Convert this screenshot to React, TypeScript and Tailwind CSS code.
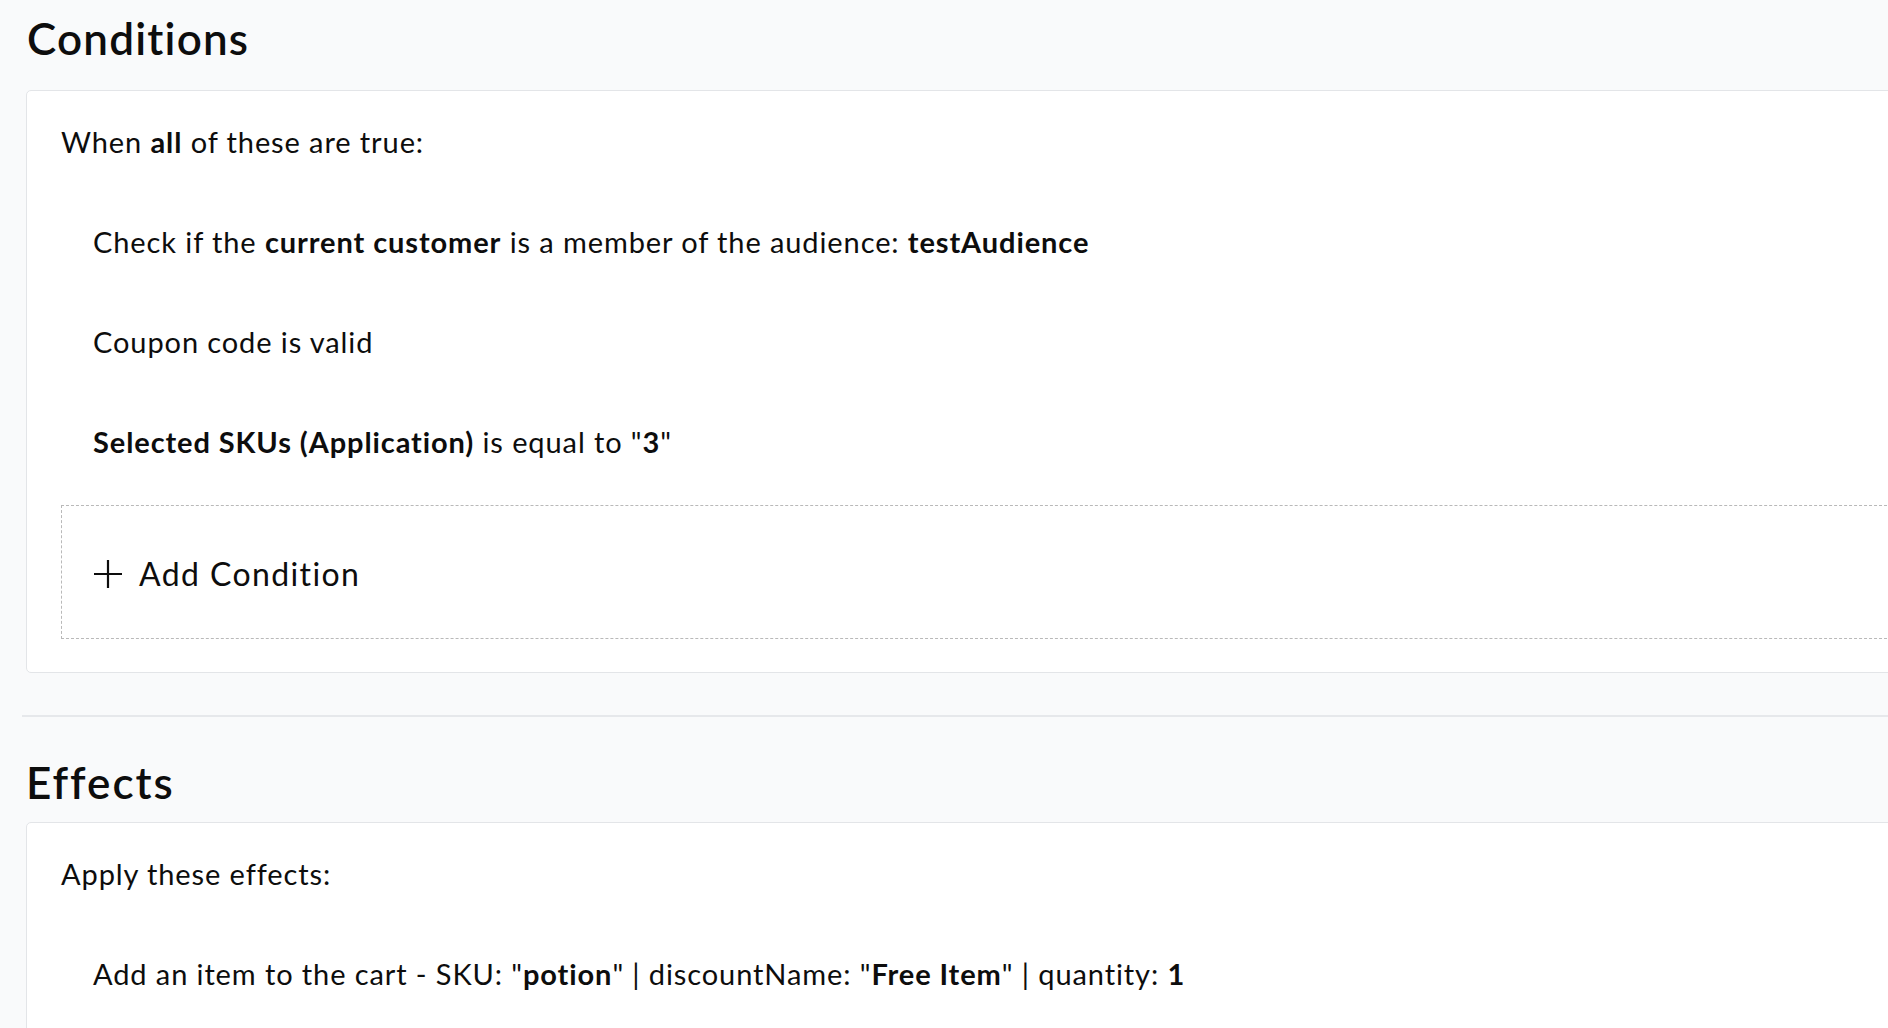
const font = { fontFamily: 'Lato, "Noto Sans", sans-serif' }

function Row({ children, indent = true }: { children: React.ReactNode; indent?: boolean }) {
  return (
    <div className={`h-[40px] leading-[40px] text-[29px] tracking-[0.9px] whitespace-nowrap ${indent ? 'pl-[32px]' : ''}`}>
      {children}
    </div>
  )
}

function PlusIcon() {
  return (
    <svg width="28" height="28" viewBox="0 0 28 28" fill="none" stroke="currentColor" strokeWidth="2.2" strokeLinecap="square">
      <path d="M14 1v26M1 14h26" />
    </svg>
  )
}

export default function App() {
  return (
    <div className="min-h-screen h-[1028px] overflow-hidden bg-[#f9fafb] text-[#0d0d0d] pl-[26px]" style={font}>
      {/* Conditions */}
      <h2 className="pt-[13px] pl-[1px] text-[44px] leading-[50px] font-semibold tracking-[1.2px]">Conditions</h2>
      <div className="mt-[27px] -mr-[20px] bg-white border border-[#e3e5e8] rounded-[5px] pl-[34px] pt-[31px] pb-[33px]">
        <div className="flex flex-col gap-[60px]">
          <Row indent={false}>
            When <b className="font-bold">all</b> of these are true:
          </Row>
          <Row>
            Check if the <b className="font-bold">current customer</b> is a member of the audience:{' '}
            <b className="font-bold">testAudience</b>
          </Row>
          <Row>Coupon code is valid</Row>
          <Row>
            <b className="font-bold">Selected SKUs (Application)</b> is equal to "<b className="font-bold">3</b>"
          </Row>
        </div>
        <div className="mt-[43px] h-[134px] border border-dashed border-[#b9b9b9] border-r-0 flex items-center pl-[32px] pt-[4px] gap-[17px]">
          <PlusIcon />
          <span className="text-[32px] tracking-[1.4px]">Add Condition</span>
        </div>
      </div>

      <div className="mt-[42px] -ml-[4px] h-[2px] bg-[#e6e8eb]" />

      {/* Effects */}
      <h2 className="pt-[40px] text-[44px] leading-[50px] font-semibold tracking-[2px]">Effects</h2>
      <div className="mt-[15px] -mr-[20px] h-[400px] bg-white border border-[#e3e5e8] rounded-[5px] pl-[34px] pt-[31px]">
        <div className="flex flex-col gap-[60px]">
          <Row indent={false}>Apply these effects:</Row>
          <Row>
            Add an item to the cart - SKU: "<b className="font-bold">potion</b>" | discountName: "
            <b className="font-bold">Free Item</b>" | quantity: <b className="font-bold">1</b>
          </Row>
        </div>
      </div>
    </div>
  )
}
